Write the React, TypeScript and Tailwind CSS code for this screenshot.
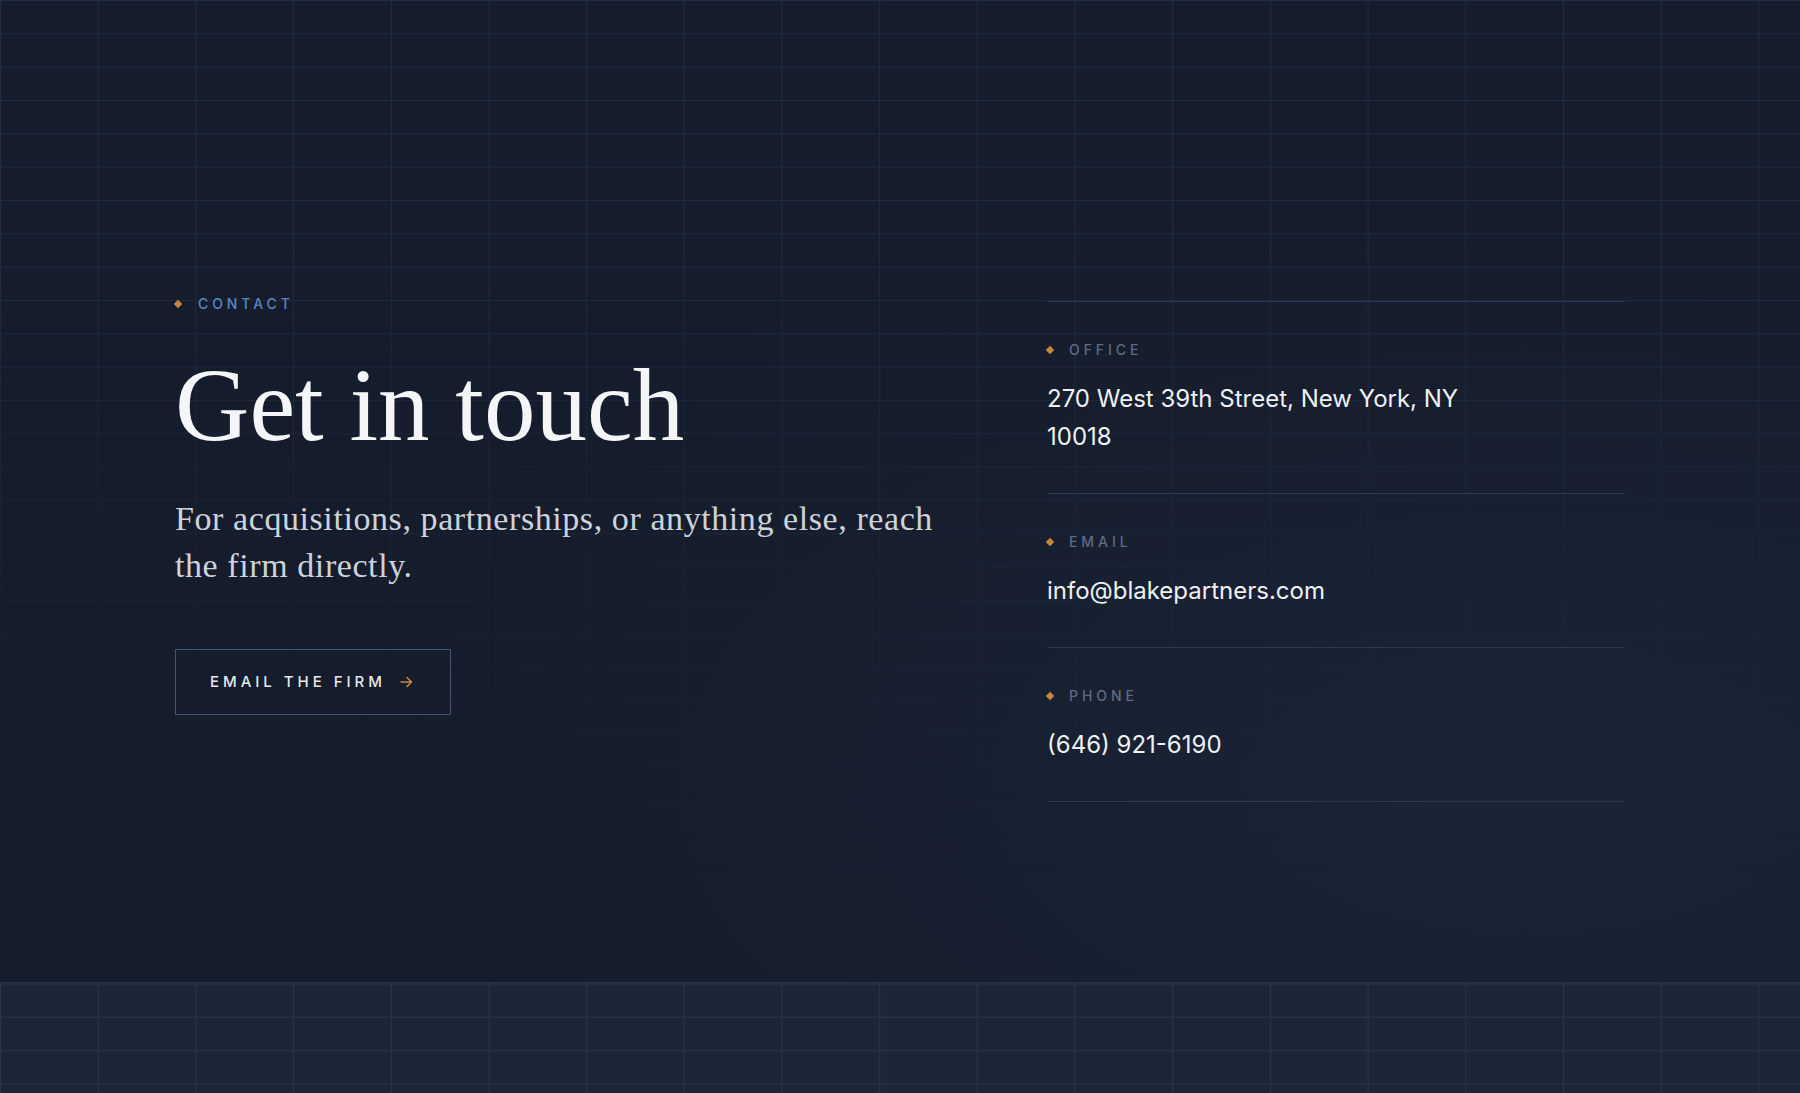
import { ReactNode } from 'react';

// ============================================================
// CONTACT DETAILS
// ============================================================

type Detail = {
    label: string;
    value: ReactNode;
};

const details: Detail[] = [
    { label: 'Office', value: <span className="block max-w-[440px]">270 West 39th Street, New York, NY 10018</span> },
    { label: 'Email', value: 'info@blakepartners.com' },
    { label: 'Phone', value: '(646) 921-6190' },
];

function Diamond() {
    return <span className="block w-[6px] h-[6px] rotate-45 bg-[#c8853f] shrink-0" />;
}

function ArrowRight() {
    return (
        <svg width="13" height="12" viewBox="0 0 13 12" fill="none" className="shrink-0">
            <path d="M1 6h10.5M7 1.5 11.5 6 7 10.5" stroke="#c98a45" strokeWidth="1.5" strokeLinecap="round" strokeLinejoin="round" />
        </svg>
    );
}

// ============================================================
// PAGE
// ============================================================
export default function App() {
    return (
        <div className="min-h-screen bg-[#151c2b] font-['Inter','Liberation_Sans',sans-serif]">
            <section className="relative h-[982px] overflow-hidden">
                {/* grid backdrop */}
                <div className="pointer-events-none absolute inset-0 bg-[linear-gradient(to_right,#1f2c42_1px,transparent_1px),linear-gradient(to_bottom,#1f2c42_1px,transparent_1px)] bg-[size:97.7px_33.33px] [mask-image:linear-gradient(to_bottom,black_0%,black_25%,rgba(0,0,0,0.35)_60%,transparent_90%)]" />
                <div className="pointer-events-none absolute inset-0 bg-[radial-gradient(ellipse_at_85%_80%,rgba(32,46,66,0.45),transparent_55%)]" />

                <div className="relative mx-auto flex w-[1450px] pt-[294px]">
                    {/* left */}
                    <div className="flex-1">
                        <div className="flex items-center gap-[17px] text-[14px] font-medium leading-5 tracking-[0.28em] uppercase text-[#5a86c2]">
                            <Diamond />
                            Contact
                        </div>
                        <h1 className="mt-10 font-['Liberation_Serif','Times_New_Roman',serif] text-[103px] leading-none text-[#f4f5f7]">
                            Get in touch
                        </h1>
                        <p className="mt-[38px] max-w-[790px] font-['Liberation_Serif','Times_New_Roman',serif] text-[34px] leading-[47px] tracking-[0.017em] text-[#cdd2db]">
                            For acquisitions, partnerships, or anything else, reach the firm directly.
                        </p>
                        <button className="mt-[60px] flex h-[66px] items-center gap-[14px] border border-[#3d5578] pl-[34px] pr-[37px] text-[15px] font-medium tracking-[0.265em] uppercase text-[#e6e8ec]">
                            Email the firm
                            <ArrowRight />
                        </button>
                    </div>

                    {/* right */}
                    <div className="mt-[7px] w-[578px] border-t border-[#2a3a52]">
                        {details.map((d) => (
                            <div key={d.label} className="border-b border-[#2a3a52] pt-[38px] pb-[37px]">
                                <div className="flex items-center gap-4 text-[14px] font-medium leading-5 tracking-[0.28em] uppercase text-[#5d6b82]">
                                    <Diamond />
                                    {d.label}
                                </div>
                                <div className="mt-5 text-[24px] leading-[38px] text-[#eef0f3]">
                                    {d.value}
                                </div>
                            </div>
                        ))}
                    </div>
                </div>
            </section>

            {/* footer strip */}
            <div className="h-[111px] border-t border-[#25324a] bg-[#1c2636] bg-[linear-gradient(to_right,#27364b_1px,transparent_1px),linear-gradient(to_bottom,#27364b_1px,transparent_1px)] bg-[size:97.7px_33.33px] bg-[position:0_0.5px]" />
        </div>
    );
}
